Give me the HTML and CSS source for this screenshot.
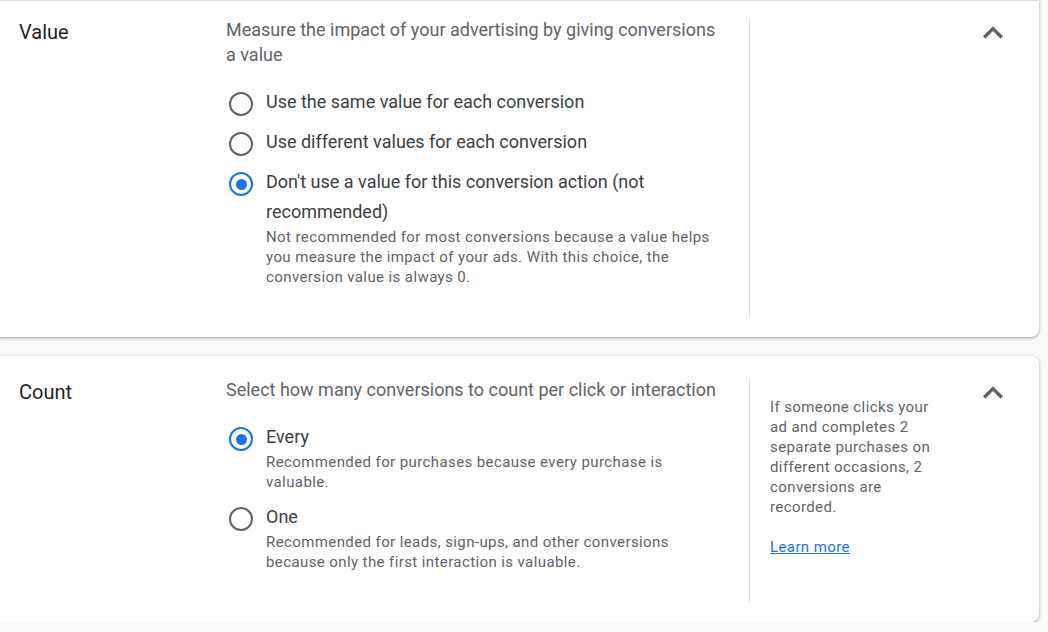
FILE: index.html
```html
<!DOCTYPE html>
<html lang="en">
<head>
<meta charset="utf-8">
<title>Conversion settings</title>
<link rel="stylesheet" href="styles.css">
</head>
<body>
<div class="page">
  <section class="card card--first">
    <div class="title">Value</div>
    <div class="main">
      <p class="lead">Measure the impact of your advertising by giving conversions a value</p>
      <div class="options">
        <div class="option">
          <span class="radio"></span>
          <div class="opt-body"><div class="label">Use the same value for each conversion</div></div>
        </div>
        <div class="option">
          <span class="radio"></span>
          <div class="opt-body"><div class="label">Use different values for each conversion</div></div>
        </div>
        <div class="option">
          <span class="radio radio--on"></span>
          <div class="opt-body">
            <div class="label">Don't use a value for this conversion action (not recommended)</div>
            <div class="desc">Not recommended for most conversions because a value helps you measure the impact of your ads. With this choice, the conversion value is always 0.</div>
          </div>
        </div>
      </div>
    </div>
    <div class="aside"></div>
    <div class="chev">
      <svg viewBox="0 0 24 24" width="40" height="40"><path d="M12 8l-6 6 1.41 1.41L12 10.83l4.59 4.58L18 14z" fill="#5f6368"/></svg>
    </div>
  </section>

  <section class="card card--second">
    <div class="title">Count</div>
    <div class="main">
      <p class="lead">Select how many conversions to count per click or interaction</p>
      <div class="options">
        <div class="option">
          <span class="radio radio--on"></span>
          <div class="opt-body">
            <div class="label">Every</div>
            <div class="desc">Recommended for purchases because every purchase is valuable.</div>
          </div>
        </div>
        <div class="option">
          <span class="radio"></span>
          <div class="opt-body">
            <div class="label">One</div>
            <div class="desc">Recommended for leads, sign-ups, and other conversions because only the first interaction is valuable.</div>
          </div>
        </div>
      </div>
    </div>
    <div class="aside">
      <p class="aside-text">If someone clicks your ad and completes 2 separate purchases on different occasions, 2 conversions are recorded.</p>
      <a class="link" href="#">Learn more</a>
    </div>
    <div class="chev">
      <svg viewBox="0 0 24 24" width="40" height="40"><path d="M12 8l-6 6 1.41 1.41L12 10.83l4.59 4.58L18 14z" fill="#5f6368"/></svg>
    </div>
  </section>
</div>
</body>
</html>
```

FILE: styles.css
```css
* { box-sizing: border-box; }

html, body {
  margin: 0;
  padding: 0;
  background: #f8f9fa;
  font-family: Roboto, "Liberation Sans", Arial, sans-serif;
  -webkit-font-smoothing: antialiased;
}

.page {
  width: 1039px;
}

.card {
  display: flex;
  align-items: stretch;
  background: #fff;
  border-radius: 0 8px 8px 0;
  box-shadow: 0 1px 2px rgba(60, 64, 67, 0.3), 0 1px 3px 1px rgba(60, 64, 67, 0.15);
  padding-bottom: 19px;
}

.card--first {
  padding-top: 17px;
  border-top: 1px solid #dadce0;
  border-radius: 0 0 8px 0;
  height: 337px;
}

.card--second {
  margin-top: 19px;
  padding-top: 22px;
  height: 266px;
}

.title {
  width: 226px;
  padding-left: 19px;
  font-size: 20px;
  line-height: 28px;
  font-weight: 400;
  color: #1f1f1f;
}

.main {
  width: 523px;
  padding-right: 23px;
  padding-bottom: 30px;
}

.lead {
  margin: -1px 0 0;
  font-size: 18px;
  line-height: 25px;
  color: #5f6368;
}

.options {
  margin-top: 20px;
  display: flex;
  flex-direction: column;
  gap: 10px;
}

.option {
  display: flex;
  align-items: flex-start;
}

.radio {
  flex: none;
  width: 24px;
  height: 24px;
  margin: 5px 13px 0 3px;
  border: 2.5px solid #5f6368;
  border-radius: 50%;
  display: flex;
  align-items: center;
  justify-content: center;
}

.radio--on {
  border-color: #1a73e8;
}

.radio--on::after {
  content: "";
  width: 11px;
  height: 11px;
  border-radius: 50%;
  background: #1a73e8;
}

.opt-body {
  flex: 1;
  padding-right: 8px;
}

.label {
  font-size: 18px;
  line-height: 30px;
  color: #3c4043;
}

.desc {
  font-size: 15px;
  line-height: 20px;
  color: #5f6368;
  letter-spacing: 0.4px;
}

.aside {
  width: 212px;
  border-left: 1px solid #dadce0;
  padding: 19px 23px 0 20px;
}

.aside-text {
  margin: 0 0 20px;
  font-size: 15px;
  line-height: 20px;
  color: #5f6368;
  letter-spacing: 0.4px;
}

.link {
  font-size: 15px;
  line-height: 20px;
  color: #1a73e8;
  text-decoration: underline;
  letter-spacing: 0.4px;
}

.chev {
  flex: 1;
  padding-left: 12px;
}

.chev svg {
  display: block;
  margin-top: -5px;
}
```
